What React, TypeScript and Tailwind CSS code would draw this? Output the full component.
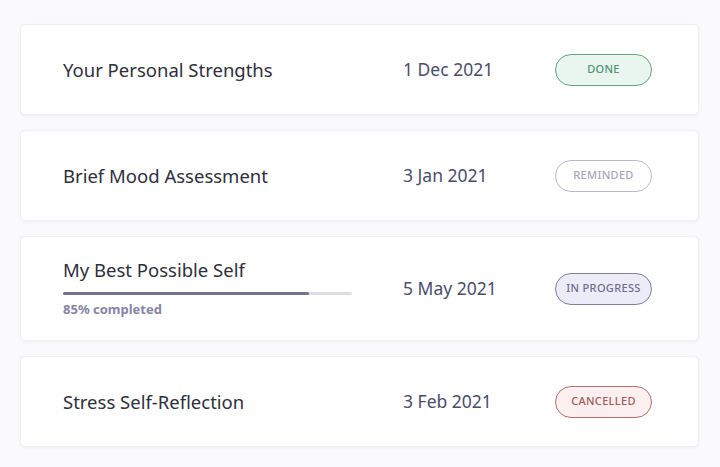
type Status = "done" | "reminded" | "progress" | "cancelled"

interface Activity {
  title: string
  date: string
  status: Status
  progress?: number
}

const activities: Activity[] = [
  { title: "Your Personal Strengths", date: "1 Dec 2021", status: "done" },
  { title: "Brief Mood Assessment", date: "3 Jan 2021", status: "reminded" },
  { title: "My Best Possible Self", date: "5 May 2021", status: "progress", progress: 85 },
  { title: "Stress Self-Reflection", date: "3 Feb 2021", status: "cancelled" },
]

const badgeStyles: Record<Status, { label: string; className: string }> = {
  done: {
    label: "DONE",
    className: "border-[#63a382] bg-[#e9f6ef] text-[#4f9473]",
  },
  reminded: {
    label: "REMINDED",
    className: "border-[#b9b8cc] bg-white text-[#a7a6bb]",
  },
  progress: {
    label: "IN PROGRESS",
    className: "border-[#7f7e9e] bg-[#ececf8] text-[#6e6d8e]",
  },
  cancelled: {
    label: "CANCELLED",
    className: "border-[#b36e6e] bg-[#fbefef] text-[#a45959]",
  },
}

function StatusBadge({ status }: { status: Status }) {
  const badge = badgeStyles[status]
  return (
    <span
      className={`flex h-[32px] w-[97px] items-center justify-center rounded-full border text-[11px] font-medium tracking-[0.03em] ${badge.className}`}
    >
      {badge.label}
    </span>
  )
}

export default function App() {
  return (
    <div className="min-h-screen bg-[#fafafc] px-5 pt-6 font-['Noto_Sans','Open_Sans',sans-serif]">
      <div className="flex w-[679px] flex-col gap-[15px]">
        {activities.map((item) => (
          <div
            key={item.title}
            className={`flex items-center rounded-[5px] border border-[#eeeef4] bg-white pl-[42px] shadow-[0_1px_3px_rgba(60,60,110,0.06)] ${
              item.progress !== undefined ? "h-[105px]" : "h-[91px]"
            }`}
          >
            {/* Title column */}
            <div className="w-[340px]">
              <p className="text-[18.5px] leading-6 text-[#2e2f3b]">{item.title}</p>
              {item.progress !== undefined && (
                <>
                  <div className="mt-[10px] h-[3px] w-[289px] rounded-full bg-[#dddde5]">
                    <div
                      className="h-full rounded-full bg-[#73728f]"
                      style={{ width: `${item.progress}%` }}
                    ></div>
                  </div>
                  <p className="mt-[5px] text-[13px] font-bold text-[#8784a5]">
                    {item.progress}% completed
                  </p>
                </>
              )}
            </div>

            {/* Date column */}
            <div className="w-[152px] text-[17.5px] text-[#4a4c6b]">{item.date}</div>

            <StatusBadge status={item.status} />
          </div>
        ))}
      </div>
    </div>
  )
}
